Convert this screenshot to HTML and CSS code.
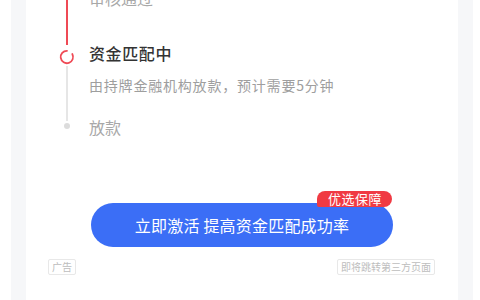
FILE: index.html
```html
<!DOCTYPE html>
<html lang="zh-CN">
<head>
<meta charset="utf-8">
<link rel="stylesheet" href="styles.css">
</head>
<body>
<div class="page">
  <div class="card">
    <div class="timeline">
      <div class="step step-done">
        <div class="rail">
          <div class="seg seg-red seg-fill"></div>
        </div>
        <div class="body">
          <div class="label">审核通过</div>
        </div>
      </div>
      <div class="step step-active">
        <div class="rail">
          <div class="seg seg-red seg-top"></div>
          <svg class="node" width="16" height="16" viewBox="0 0 16 16"><path d="M13.3 5 A6.2 6.2 0 1 1 8 1.8" fill="none" stroke="#ef4a55" stroke-width="1.8" stroke-linecap="round"/></svg>
          <div class="seg seg-gray seg-fill seg-after"></div>
        </div>
        <div class="body">
          <div class="title">资金匹配中</div>
          <div class="desc">由持牌金融机构放款，预计需要5分钟</div>
        </div>
      </div>
      <div class="step step-todo">
        <div class="rail">
          <div class="seg seg-gray seg-short"></div>
          <div class="dot"></div>
        </div>
        <div class="body">
          <div class="label">放款</div>
        </div>
      </div>
    </div>
    <div class="cta">
      <div class="btn">立即激活 提高资金匹配成功率</div>
      <div class="badge">优选保障</div>
    </div>
    <div class="tags">
      <span class="tag">广告</span>
      <span class="tag">即将跳转第三方页面</span>
    </div>
  </div>
</div>
</body>
</html>
```
FILE: styles.css
```css
* { box-sizing: border-box; }
html, body { margin: 0; padding: 0; background: #ffffff; }
body {
  font-family: "Noto Sans CJK SC", "Noto Sans", sans-serif;
  width: 480px;
  height: 300px;
  overflow: hidden;
}
.page {
  margin: 0 7px 0 11px;
  height: 300px;
  background: #f6f7f9;
  padding: 0 15px;
  overflow: hidden;
}
.card {
  background: #ffffff;
  height: 320px;
  padding-left: 28px;
  padding-right: 0;
}
.timeline {
  margin-top: -13px;
  display: flex;
  flex-direction: column;
}
.step {
  display: grid;
  grid-template-columns: 26px 1fr;
  column-gap: 9px;
}
.rail {
  display: flex;
  flex-direction: column;
  align-items: center;
}
.seg { width: 2px; }
.seg-red { background: #ef4a55; }
.seg-gray { background: #e6e6e6; }
.seg-fill { flex: 1; }
.seg-top { height: 3px; }
.seg-after { margin-top: 1px; }
.seg-short { height: 5px; }
.node { display: block; margin-top: 4px; }
.dot {
  width: 6px;
  height: 6px;
  border-radius: 50%;
  background: #dcdcdc;
  margin-top: 2px;
}
.step-done .body { padding-bottom: 33px; }
.step-active .body { padding-bottom: 21px; }
.label {
  font-size: 16px;
  line-height: 22px;
  color: #a8a8a8;
}
.title {
  font-size: 16px;
  line-height: 22px;
  font-weight: 500;
  color: #333333;
  letter-spacing: 0.6px;
}
.desc {
  margin-top: 11px;
  font-size: 14px;
  line-height: 20px;
  color: #9e9e9e;
  letter-spacing: 0.8px;
}
.cta {
  position: relative;
  width: 302px;
  margin: 65px 0 0 37px;
}
.btn {
  height: 44px;
  border-radius: 22px;
  background: #3b6ef6;
  color: #ffffff;
  font-size: 16px;
  line-height: 44px;
  text-align: center;
  letter-spacing: 0.2px;
}
.badge {
  position: absolute;
  right: 1px;
  top: -12px;
  height: 16px;
  padding: 0 10px 0 11px;
  border-radius: 8px 8px 8px 2px;
  background: #f03a43;
  color: #ffffff;
  font-size: 13px;
  line-height: 16px;
  letter-spacing: 0.5px;
}
.tags {
  display: flex;
  justify-content: space-between;
  margin: 12px 23px 0 -6px;
}
.tag {
  height: 16px;
  padding: 0 3px;
  border: 1px solid #e8e8e8;
  border-radius: 2px;
  font-size: 10px;
  line-height: 14px;
  color: #bdbdbd;
}
```
